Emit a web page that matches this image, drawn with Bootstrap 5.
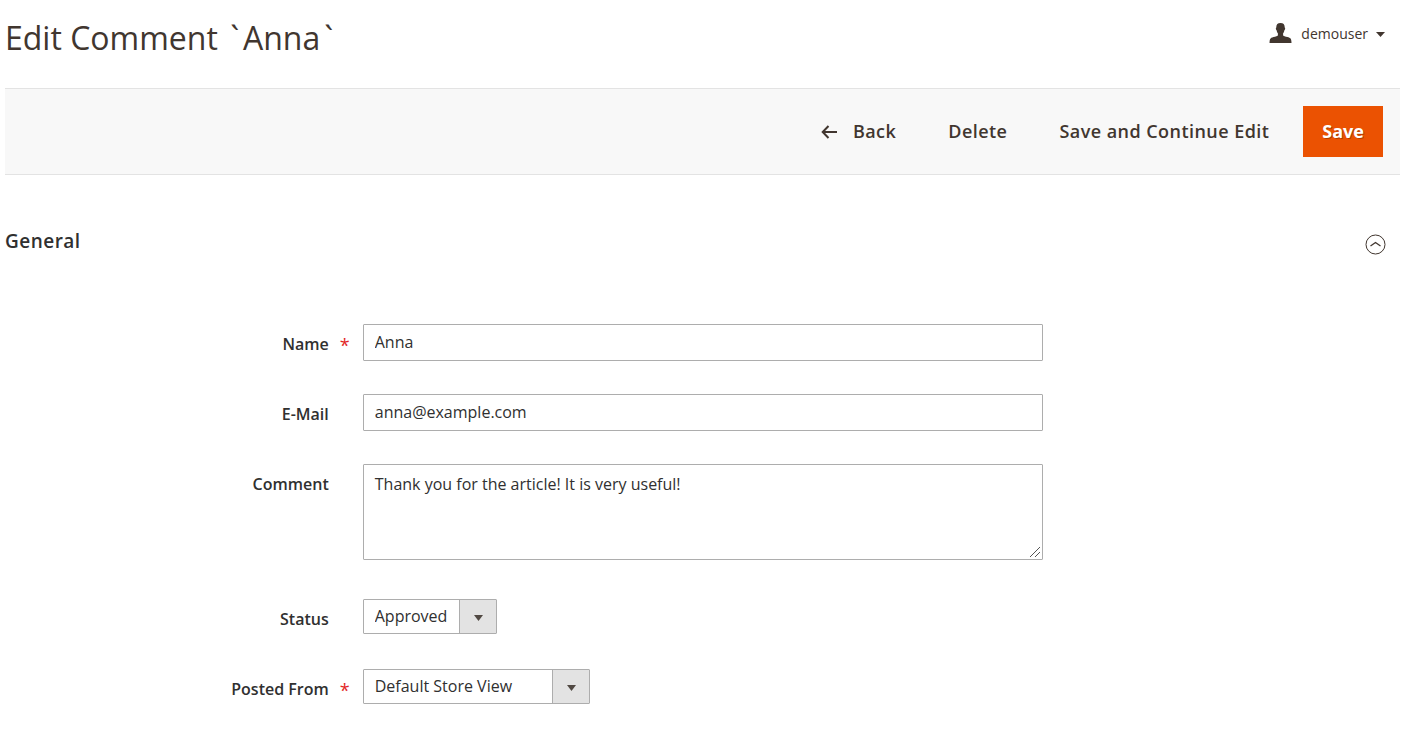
<!DOCTYPE html>
<html lang="en">
<head>
<meta charset="utf-8">
<meta name="viewport" content="width=device-width, initial-scale=1">
<title>Edit Comment</title>
<link href="https://cdn.jsdelivr.net/npm/bootstrap@5.3.0/dist/css/bootstrap.min.css" rel="stylesheet">
<style>
  body { font-family: "Open Sans", sans-serif; font-size: 16px; line-height: 22px; color: #303030; background: #fff; }
  .page { padding: 0 8px 0 5px; }
  .page-head { height: 88px; }
  .page-title { font-size: 32px; line-height: 46px; font-weight: 400; color: #41362f; padding-top: 15px; }
  .tick { padding: 0 4px; }
  .user-menu { font-size: 14px; line-height: 20px; color: #41362f; padding: 23px 15px 0 0; font-weight: 400; }
  .user-menu svg { fill: #41362f; }
  .actions { background: #f8f8f8; border-top: 1px solid #e3e3e3; border-bottom: 1px solid #e3e3e3; padding: 17px; }
  .action { border: 0; border-radius: 0; background: none; color: #41362f; font-size: 18px; line-height: 27px; font-weight: 600; letter-spacing: .025em; padding: 12px 18px; }
  .action-primary, .action-primary:hover { background: #eb5202; color: #fff; font-weight: 700; letter-spacing: normal; padding: 12px 19px; text-shadow: 1px 1px 0 rgba(0,0,0,.25); }
  .section-head { padding: 52px 14px 0 0; margin-bottom: 69px; }
  .section-title { font-size: 19px; line-height: 28px; font-weight: 600; letter-spacing: .025em; color: #303030; }
  .collapse-btn { border: 0; background: none; margin-top: 7px; }
  .fields { row-gap: 33px; }
  .field-row { min-height: 37px; }
  .field-label { padding: 9px 25px 0 0; font-weight: 600; text-align: right; }
  .required { position: relative; }
  .required::after { content: "*"; position: absolute; right: 4px; top: 10px; color: #e22626; font-weight: 400; font-size: 18px; }
  .field-control { padding: 0 8px 0 9px; }
  .entry { border: 1px solid #adadad; border-radius: 1px; color: #303030; font-size: 16px; line-height: 22px; padding: 6px 11px 7px; }
  .entry-area { height: 96px; padding-top: 8px; margin-bottom: 6px; }
  .entry-area::-webkit-resizer {
    background: url("data:image/svg+xml,%3Csvg xmlns='http://www.w3.org/2000/svg' viewBox='0 0 15 15'%3E%3Cpath d='M3 13L13 3M8 13l5-5' stroke='%23555'/%3E%3C/svg%3E") no-repeat right bottom / 15px 15px;
  }
  .entry-select {
    width: auto; padding: 5px 48px 6px 11px;
    background-color: #fff; background-size: 9px 6px, 37px 100%;
    background-position: right 13px top 15px, right top; background-repeat: no-repeat;
    background-image: url("data:image/svg+xml,%3Csvg xmlns='http://www.w3.org/2000/svg' viewBox='0 0 9 6'%3E%3Cpath d='M0 0h9L4.500 6z' fill='%23514943'/%3E%3C/svg%3E"), linear-gradient(to right, #adadad 1px, #e3e3e3 1px);
  }
  .store-select { min-width: 227px; }
</style>
</head>
<body>
<div class="page">
  <header class="page-head d-flex justify-content-between align-items-start">
    <h1 class="page-title m-0">Edit Comment <span class="tick">`</span>Anna<span class="tick">`</span></h1>
    <a href="#" class="user-menu d-flex align-items-center text-decoration-none">
      <svg class="me-2" width="24" height="22" viewBox="0 0 24 22" aria-hidden="true"><path d="M11.500 0c3 0 4.300 1.600 4.200 4.500.8.400.5 2.300-.4 2.900-.2 1.600-.8 2.300-1.200 2.800v2c.5 1 2.200 1.300 4.400 1.900 2.800.8 4 1.400 4 5.900H.5c0-4.500 1.200-5.100 4-5.900 2.200-.6 3.900-.9 4.400-1.900v-2c-.4-.5-1-1.200-1.200-2.800-.9-.6-1.200-2.500-.4-2.900C7.200 1.600 8.500 0 11.500 0z"/></svg>
      <span>demouser</span>
      <svg class="ms-2" width="9" height="5" viewBox="0 0 9 5" aria-hidden="true"><path d="M0 0h9L4.500 5z"/></svg>
    </a>
  </header>

  <div class="actions d-flex justify-content-end gap-3">
    <button type="button" class="action d-flex align-items-center">
      <svg class="me-3" width="16" height="16" viewBox="0 0 16 16" fill="none" stroke="#41362f" stroke-width="2" aria-hidden="true"><path d="M16 8H2M7.500 2L1.700 8l5.800 6"/></svg>Back
    </button>
    <button type="button" class="action">Delete</button>
    <button type="button" class="action">Save and Continue Edit</button>
    <button type="submit" form="comment-form" class="action action-primary">Save</button>
  </div>

  <div class="section-head d-flex justify-content-between align-items-start">
    <h2 class="section-title m-0">General</h2>
    <button type="button" class="collapse-btn p-0 d-flex" aria-label="Collapse General">
      <svg width="21" height="21" viewBox="0 0 21 21" fill="none" stroke="#41362f" aria-hidden="true"><circle cx="10.500" cy="10.500" r="9.500"/><path d="M5.500 12l5-3.500 5 3.500" stroke-width="1.300"/></svg>
    </button>
  </div>

  <form id="comment-form" class="fields d-flex flex-column">
    <div class="row g-0 field-row">
      <label class="col-3 field-label required" for="name">Name</label>
      <div class="col-6 field-control"><input id="name" type="text" class="form-control entry" value="Anna"></div>
    </div>
    <div class="row g-0 field-row">
      <label class="col-3 field-label" for="email">E-Mail</label>
      <div class="col-6 field-control"><input id="email" type="email" class="form-control entry" value="anna@example.com"></div>
    </div>
    <div class="row g-0 field-row">
      <label class="col-3 field-label" for="comment">Comment</label>
      <div class="col-6 field-control"><textarea id="comment" class="form-control entry entry-area">Thank you for the article! It is very useful!</textarea></div>
    </div>
    <div class="row g-0 field-row">
      <label class="col-3 field-label" for="status">Status</label>
      <div class="col-6 field-control"><select id="status" class="form-select entry entry-select"><option>Approved</option></select></div>
    </div>
    <div class="row g-0 field-row">
      <label class="col-3 field-label required" for="store">Posted From</label>
      <div class="col-6 field-control"><select id="store" class="form-select entry entry-select store-select"><option>Default Store View</option></select></div>
    </div>
  </form>
</div>
<script src="https://cdn.jsdelivr.net/npm/bootstrap@5.3.0/dist/js/bootstrap.bundle.min.js"></script>
</body>
</html>
